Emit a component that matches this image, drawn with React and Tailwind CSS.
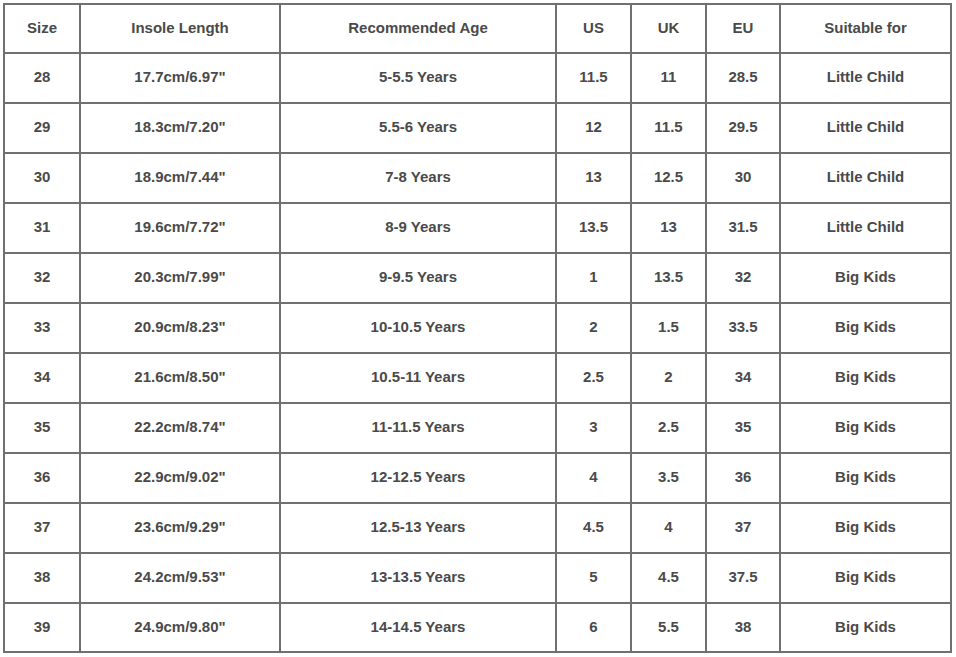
import React from "react";

const headers = ["Size", "Insole Length", "Recommended Age", "US", "UK", "EU", "Suitable for"];

const rows = [
  ["28", "17.7cm/6.97\"", "5-5.5 Years", "11.5", "11", "28.5", "Little Child"],
  ["29", "18.3cm/7.20\"", "5.5-6 Years", "12", "11.5", "29.5", "Little Child"],
  ["30", "18.9cm/7.44\"", "7-8 Years", "13", "12.5", "30", "Little Child"],
  ["31", "19.6cm/7.72\"", "8-9 Years", "13.5", "13", "31.5", "Little Child"],
  ["32", "20.3cm/7.99\"", "9-9.5 Years", "1", "13.5", "32", "Big Kids"],
  ["33", "20.9cm/8.23\"", "10-10.5 Years", "2", "1.5", "33.5", "Big Kids"],
  ["34", "21.6cm/8.50\"", "10.5-11 Years", "2.5", "2", "34", "Big Kids"],
  ["35", "22.2cm/8.74\"", "11-11.5 Years", "3", "2.5", "35", "Big Kids"],
  ["36", "22.9cm/9.02\"", "12-12.5 Years", "4", "3.5", "36", "Big Kids"],
  ["37", "23.6cm/9.29\"", "12.5-13 Years", "4.5", "4", "37", "Big Kids"],
  ["38", "24.2cm/9.53\"", "13-13.5 Years", "5", "4.5", "37.5", "Big Kids"],
  ["39", "24.9cm/9.80\"", "14-14.5 Years", "6", "5.5", "38", "Big Kids"],
];

const Cell = ({ children }) => (
  <div className="flex items-center justify-center bg-white pb-[1px] text-[15px] font-bold text-[#4a4a4a]">
    {children}
  </div>
);

export default function App() {
  return (
    <div className="min-h-[657px] w-[956px] bg-white pl-[3px] pt-[3px]" style={{ fontFamily: '"Liberation Sans", Arial, sans-serif' }}>
      <div className="grid w-[949px] grid-cols-[74px_198px_274px_73px_73px_72px_169px] grid-rows-[47px_repeat(10,48px)_48px_47px] gap-[2px] bg-[#707070] p-[2px]">
        {headers.map((h) => (
          <Cell key={h}>{h}</Cell>
        ))}
        {rows.map((r) =>
          r.map((c, i) => <Cell key={r[0] + "-" + i}>{c}</Cell>)
        )}
      </div>
    </div>
  );
}
